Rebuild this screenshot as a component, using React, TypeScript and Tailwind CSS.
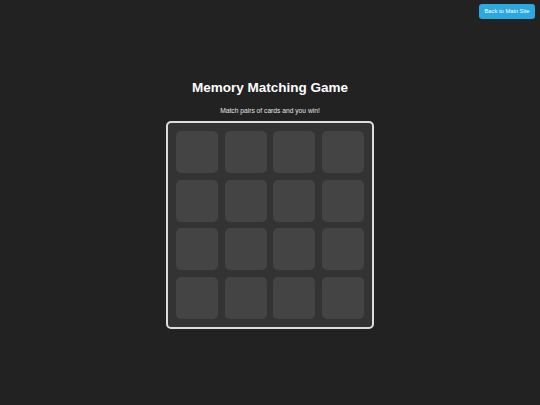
import React from "react";

export default function App() {
  const cards = Array.from({ length: 16 });
  return (
    <div className="relative min-h-[405px] w-full bg-[#222222] font-['Liberation_Sans',Arial,sans-serif] text-white">
      <button className="absolute right-[5px] top-[4px] h-[15px] w-[56px] rounded-[3px] bg-[#2aa9e0] text-[5.8px] leading-none text-white">
        Back to Main Site
      </button>
      <div className="flex flex-col items-center pt-[79px]">
        <h1 className="text-[13.5px] font-bold leading-[18px]">Memory Matching Game</h1>
        <p className="mt-[9px] text-[6.7px] leading-[9px] text-[#e5e5e5]">Match pairs of cards and you win!</p>
        <div className="mt-[6px] w-[208px] rounded-[5px] border-2 border-[#dddddd] bg-[#333333] p-[8px]">
          <div className="grid grid-cols-4 gap-[6.67px]">
            {cards.map((_, i) => (
              <div key={i} className="aspect-square rounded-[5px] bg-[#444444]" />
            ))}
          </div>
        </div>
      </div>
    </div>
  );
}
